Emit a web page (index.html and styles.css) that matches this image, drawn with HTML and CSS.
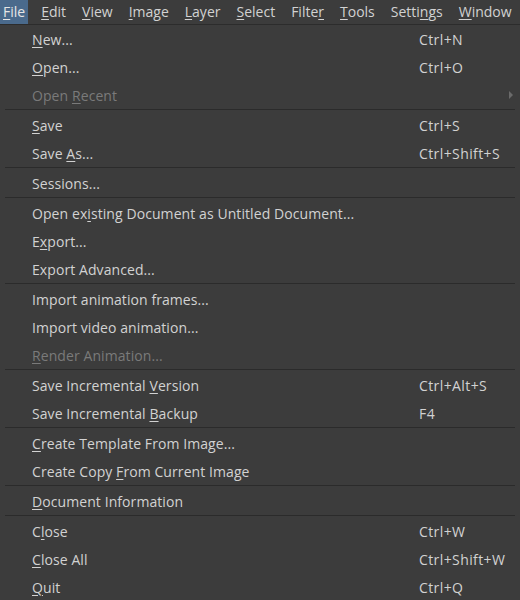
FILE: index.html
```html
<!DOCTYPE html>
<html>
<head>
<meta charset="utf-8">
<link rel="stylesheet" href="styles.css">
</head>
<body>
<div class="bar">
  <span class="mi active"><u>F</u>ile</span>
  <span class="mi"><u>E</u>dit</span>
  <span class="mi"><u>V</u>iew</span>
  <span class="mi"><u>I</u>mage</span>
  <span class="mi"><u>L</u>ayer</span>
  <span class="mi"><u>S</u>elect</span>
  <span class="mi">Filte<u>r</u></span>
  <span class="mi"><u>T</u>ools</span>
  <span class="mi">Setti<u>n</u>gs</span>
  <span class="mi"><u>W</u>indow</span>
</div>
<div class="menu">
  <div class="row"><span class="lbl"><u>N</u>ew...</span><span class="sc">Ctrl+N</span></div>
  <div class="row"><span class="lbl"><u>O</u>pen...</span><span class="sc">Ctrl+O</span></div>
  <div class="row dis"><span class="lbl">Open <u>R</u>ecent</span><span class="arrow"></span></div>
  <div class="sep"></div>
  <div class="row"><span class="lbl"><u>S</u>ave</span><span class="sc">Ctrl+S</span></div>
  <div class="row"><span class="lbl">Save <u>A</u>s...</span><span class="sc">Ctrl+Shift+S</span></div>
  <div class="sep"></div>
  <div class="row"><span class="lbl">Sessions...</span></div>
  <div class="sep"></div>
  <div class="row"><span class="lbl">Open ex<u>i</u>sting Document as Untitled Document...</span></div>
  <div class="row"><span class="lbl">E<u>x</u>port...</span></div>
  <div class="row"><span class="lbl">Export Advanced...</span></div>
  <div class="sep"></div>
  <div class="row"><span class="lbl">Import animation frames...</span></div>
  <div class="row"><span class="lbl">Import video animation...</span></div>
  <div class="row dis"><span class="lbl"><u>R</u>ender Animation...</span></div>
  <div class="sep"></div>
  <div class="row"><span class="lbl">Save Incremental <u>V</u>ersion</span><span class="sc">Ctrl+Alt+S</span></div>
  <div class="row"><span class="lbl">Save Incremental <u>B</u>ackup</span><span class="sc">F4</span></div>
  <div class="sep"></div>
  <div class="row"><span class="lbl"><u>C</u>reate Template From Image...</span></div>
  <div class="row"><span class="lbl">Create Copy <u>F</u>rom Current Image</span></div>
  <div class="sep"></div>
  <div class="row"><span class="lbl"><u>D</u>ocument Information</span></div>
  <div class="sep"></div>
  <div class="row"><span class="lbl">C<u>l</u>ose</span><span class="sc">Ctrl+W</span></div>
  <div class="row"><span class="lbl"><u>C</u>lose All</span><span class="sc">Ctrl+Shift+W</span></div>
  <div class="row"><span class="lbl"><u>Q</u>uit</span><span class="sc">Ctrl+Q</span></div>
</div>
</body>
</html>
```
FILE: styles.css
```css
html, body {
  margin: 0;
  padding: 0;
  background: #3c3c3c;
  width: 520px;
  height: 600px;
  overflow: hidden;
  font-family: "Open Sans", "Noto Sans", sans-serif;
  font-size: 14px;
  color: #d2d2d2;
}
u {
  text-decoration: underline;
  text-underline-offset: 2px;
  text-decoration-thickness: 1px;
}
.bar {
  display: flex;
  height: 24px;
  align-items: stretch;
  gap: 10px;
  background: #3c3c3c;
  border-bottom: 1px solid #2c2c2c;
}
.mi {
  display: flex;
  align-items: center;
  padding: 0 3px;
  line-height: 24px;
}
.mi.active {
  background: #4a6a8c;
  color: #e6e6e6;
}
.menu {
  background: #3c3c3c;
}
.row {
  display: flex;
  align-items: center;
  height: 28px;
  padding-left: 32px;
  position: relative;
  letter-spacing: 0.08px;
}
.lbl {
  flex: 0 0 387px;
  white-space: nowrap;
}
.sc {
  white-space: nowrap;
  letter-spacing: 0.4px;
}
.dis {
  color: #7a7a7a;
}
.arrow {
  position: absolute;
  left: 509px;
  top: 10px;
  width: 0;
  height: 0;
  border-top: 4px solid transparent;
  border-bottom: 4px solid transparent;
  border-left: 4px solid #6a6a6a;
}
.sep {
  height: 2px;
  display: flex;
  align-items: flex-start;
}
.sep::before {
  content: "";
  display: block;
  height: 1px;
  margin-left: 5px;
  width: 510px;
  background: #2b2b2b;
}
```
